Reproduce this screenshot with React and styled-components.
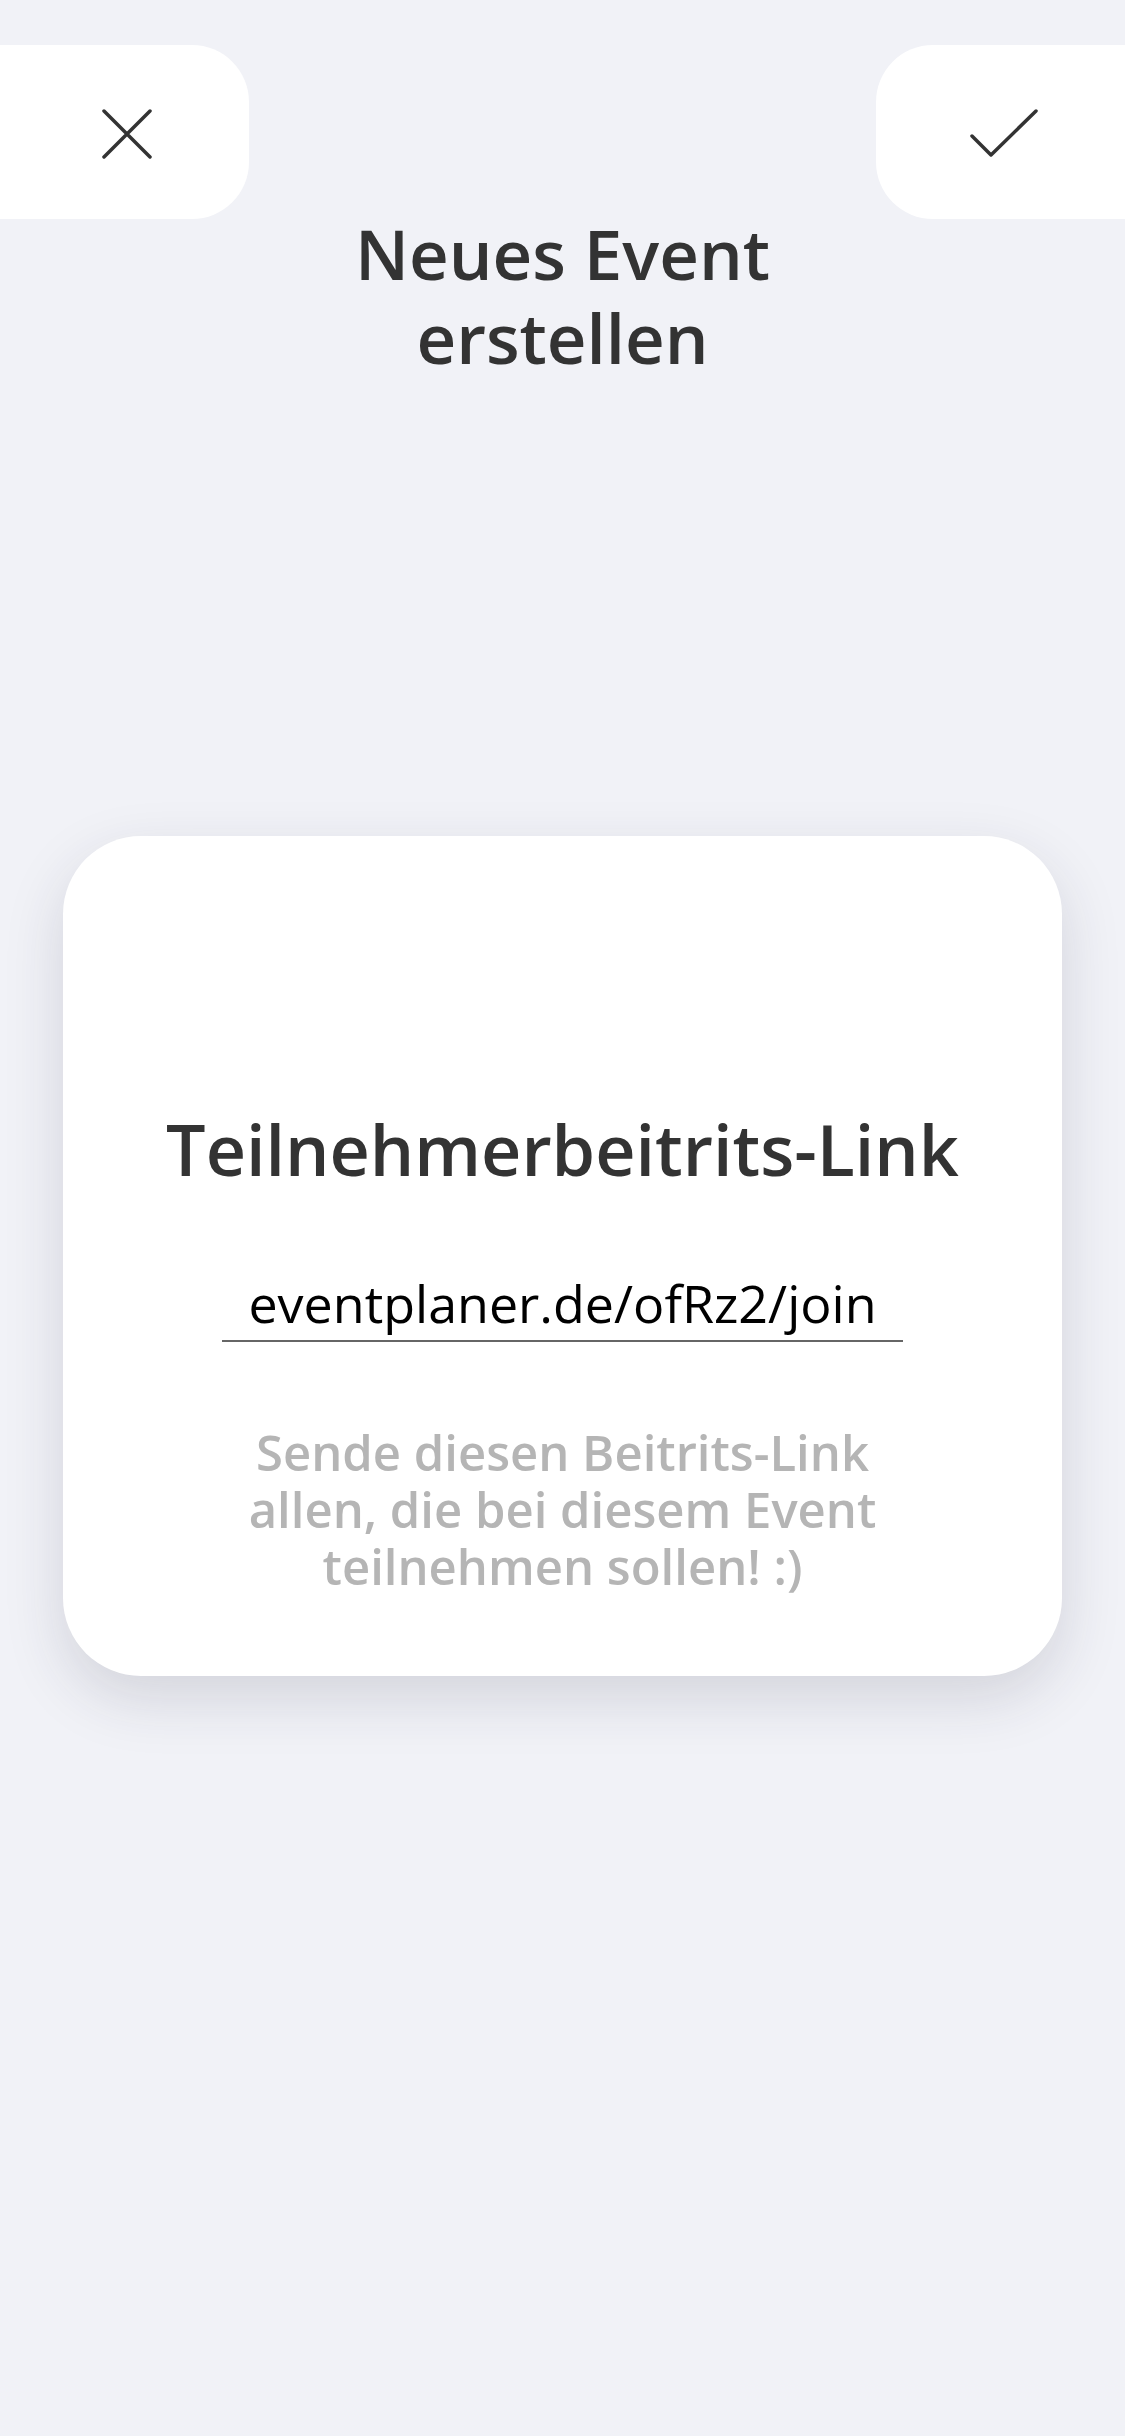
import React from "react";
import styled, { createGlobalStyle } from "styled-components";

const GlobalStyle = createGlobalStyle`
  html, body {
    margin: 0;
    padding: 0;
    background: #f1f2f7;
  }
  body {
    font-family: "Open Sans", "Noto Sans", sans-serif;
    color: #333333;
  }
`;

const Page = styled.div`
  width: 1125px;
  min-height: 2436px;
  display: flex;
  flex-direction: column;
`;

const Header = styled.header`
  display: flex;
  justify-content: space-between;
  align-items: center;
  padding-top: 45px;
`;

const SideButton = styled.button`
  width: 249px;
  height: 174px;
  border: none;
  background: #ffffff;
  display: flex;
  align-items: center;
  justify-content: center;
  cursor: pointer;
  padding: 0;
  border-radius: ${({ $side }) =>
    $side === "left" ? "0 57px 57px 0" : "57px 0 0 57px"};
  svg {
    margin-left: ${({ $side }) => ($side === "left" ? "4px" : "6px")};
    margin-top: 4px;
  }
`;

const Title = styled.h1`
  margin: 0;
  margin-top: -8px;
  text-align: center;
  font-size: 69px;
  line-height: 84px;
  font-weight: 600;
  color: #333333;
`;

const Card = styled.section`
  margin: 457px 63px 0;
  height: 840px;
  box-sizing: border-box;
  background: #ffffff;
  border-radius: 78px;
  box-shadow: 0 22px 60px rgba(40, 42, 70, 0.15);
  display: flex;
  flex-direction: column;
  align-items: center;
  padding-top: 268px;
`;

const CardTitle = styled.h2`
  margin: 0;
  font-size: 70px;
  line-height: 90px;
  font-weight: 600;
  color: #333333;
`;

const LinkField = styled.div`
  margin-top: 78px;
  width: 681px;
  text-align: center;
  font-size: 52px;
  line-height: 62px;
  color: #000000;
  border-bottom: 2px solid #666666;
  padding-bottom: 6px;
`;

const Hint = styled.p`
  margin: 82px 0 0;
  text-align: center;
  font-size: 49px;
  line-height: 57px;
  font-weight: 600;
  color: #b5b5b5;
`;

const CloseIcon = () => (
  <svg width="50" height="50" viewBox="0 0 50 50" fill="none">
    <path
      d="M2 2 L48 48 M48 2 L2 48"
      stroke="#333333"
      strokeWidth="3.5"
      strokeLinecap="round"
    />
  </svg>
);

const CheckIcon = () => (
  <svg width="68" height="50" viewBox="0 0 68 50" fill="none">
    <path
      d="M2 27 L21 46 L66 2"
      stroke="#333333"
      strokeWidth="3.5"
      strokeLinecap="round"
      strokeLinejoin="round"
    />
  </svg>
);

const App = () => {
  return (
    <Page>
      <GlobalStyle />
      <Header>
        <SideButton $side="left" aria-label="Abbrechen">
          <CloseIcon />
        </SideButton>
        <SideButton $side="right" aria-label="Speichern">
          <CheckIcon />
        </SideButton>
      </Header>
      <Title>
        Neues Event
        <br />
        erstellen
      </Title>

      <Card>
        <CardTitle>Teilnehmerbeitrits-Link</CardTitle>
        <LinkField>eventplaner.de/ofRz2/join</LinkField>
        <Hint>
          Sende diesen Beitrits-Link
          <br />
          allen, die bei diesem Event
          <br />
          teilnehmen sollen! :)
        </Hint>
      </Card>
    </Page>
  );
};

export default App;
